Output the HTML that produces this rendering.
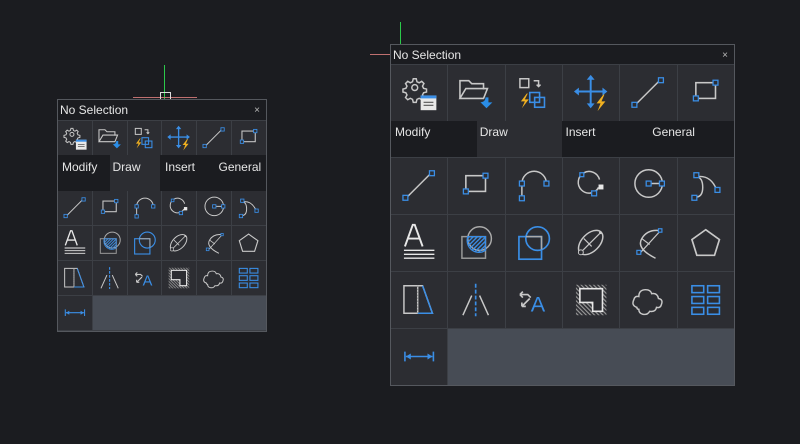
<!DOCTYPE html>
<html><head><meta charset="utf-8"><style>
html,body{margin:0;padding:0;background:#1b1c20;width:800px;height:444px;overflow:hidden;font-family:"Liberation Sans",sans-serif;}
.p{position:absolute;background:#3c3f45;border:1px solid #55585e;box-sizing:border-box;}
.t{background:#1b1c20;color:#e6e6e6;position:relative;}
.t .x{position:absolute;right:6px;top:0;color:#bbb;font-size:10px;}
.g{display:grid;grid-template-columns:repeat(6,1fr);gap:1px;margin-top:1px;}
.c{background:#2c2d32;display:flex;align-items:center;justify-content:center;overflow:hidden;}
.c svg{width:100%;height:100%;}
.sm .c svg{width:112%;height:112%;flex:none;}
.e{background:#474c55;}
.tabs{display:flex;background:#1b1c20;}
.tabs div{flex:1;color:#e6e6e6;box-sizing:border-box;}
.tabs .on{background:#2c2d32;}
.ln{position:absolute;}
</style></head><body>
<svg width="0" height="0" style="position:absolute">
<defs>
<symbol id="gear" viewBox="0 0 57 57"><g stroke="#c8c8c8" stroke-width="2" fill="none" transform="translate(24 23) scale(0.75) translate(-24 -23)"><path d="M22 11h4l1 4 3 1.5 3.5-2 3 3-2 3.5 1.5 3 4 1v4l-4 1-1.5 3 2 3.5-3 3-3.5-2-3 1.5-1 4h-4l-1-4-3-1.5-3.5 2-3-3 2-3.5-1.5-3-4-1v-4l4-1 1.5-3-2-3.5 3-3 3.5 2 3-1.5z"/><circle cx="24" cy="23" r="4"/></g><rect x="30" y="31" width="16" height="15" fill="#e8e8e8"/><rect x="30" y="31" width="16" height="3" fill="#3a8ee6"/><path d="M33 38h10M33 41h10" stroke="#555" stroke-width="1.2"/></symbol>
<symbol id="folder" viewBox="0 0 57 57"><path d="M12 34V16h9l3 3h12v6M12 34l6-10h22l-4 10z" stroke="#c8c8c8" stroke-width="1.6" fill="none"/><path d="M32 38q6 0 6-5h3v5h4l-6 6-6-6h4" fill="#2a8de6"/></symbol>
<symbol id="swap" viewBox="0 0 57 57"><rect x="14" y="14" width="9" height="9" stroke="#c8c8c8" stroke-width="1.5" fill="none"/><path d="M28 16h5v6M31 20l2 2 2-2" stroke="#c8c8c8" stroke-width="1.5" fill="none"/><path d="M21 29l-6 8h4l-3 7 7-9h-4l3-6z" fill="#f0b020"/><rect x="24" y="28" width="10" height="10" stroke="#3a8ee6" stroke-width="1.6" fill="none"/><rect x="29" y="33" width="10" height="10" stroke="#3a8ee6" stroke-width="1.6" fill="none"/></symbol>
<symbol id="move" viewBox="0 0 57 57"><path d="M28 13v28M14 27h28" stroke="#3a8ee6" stroke-width="2"/><path d="M28 10l-4 5h8zM28 44l-4-5h8zM11 27l5-4v8zM45 27l-5-4v8z" fill="#3a8ee6"/><path d="M41 30l-7 9h4l-3 8 8-10h-4l3-7z" fill="#f0b020"/></symbol>
<symbol id="line" viewBox="0 0 57 57"><path d="M15 41L41 15" stroke="#c8c8c8" stroke-width="1.5"/><rect x="12" y="38" width="5" height="5" fill="#2c2d32" stroke="#3a8ee6" stroke-width="1.3"/><rect x="39" y="13" width="5" height="5" fill="#2c2d32" stroke="#3a8ee6" stroke-width="1.3"/></symbol>
<symbol id="rect" viewBox="0 0 57 57"><rect x="18" y="18" width="20" height="16" stroke="#c8c8c8" stroke-width="1.6" fill="none"/><rect x="15.5" y="31.5" width="5" height="5" fill="#2c2d32" stroke="#3a8ee6" stroke-width="1.3"/><rect x="35.5" y="15.5" width="5" height="5" fill="#2c2d32" stroke="#3a8ee6" stroke-width="1.3"/></symbol>
<symbol id="arc" viewBox="0 0 57 57"><path d="M16 41V26A12.5 12.5 0 0 1 41 26" stroke="#c8c8c8" stroke-width="1.5" fill="none"/><g fill="#2c2d32" stroke="#3a8ee6" stroke-width="1.3"><rect x="13.5" y="23.5" width="5" height="5"/><rect x="13.5" y="38.5" width="5" height="5"/><rect x="38.5" y="23.5" width="5" height="5"/></g></symbol>
<symbol id="c3" viewBox="0 0 57 57"><path d="M36 30A11 11 0 1 1 37 22" stroke="#c8c8c8" stroke-width="1.5" fill="none"/><path d="M36 30a11 11 0 0 1-7 6" stroke="#c8c8c8" stroke-width="1.5" fill="none"/><g fill="#2c2d32" stroke="#3a8ee6" stroke-width="1.3"><rect x="17" y="15" width="4" height="4"/><rect x="29" y="33.5" width="5" height="5"/></g><rect x="36" y="27" width="5" height="5" fill="#e8e8e8"/></symbol>
<symbol id="cc" viewBox="0 0 57 57"><circle cx="29" cy="26" r="14" stroke="#c8c8c8" stroke-width="1.5" fill="none"/><path d="M29 26h13" stroke="#c8c8c8" stroke-width="1.5"/><g fill="#2c2d32" stroke="#3a8ee6" stroke-width="1.3"><rect x="26.5" y="23.5" width="5" height="5"/><rect x="40" y="23.5" width="5" height="5"/></g></symbol>
<symbol id="spl" viewBox="0 0 57 57"><path d="M17 40q8 0 8-10t-6-11q14-2 20 13" stroke="#c8c8c8" stroke-width="1.5" fill="none"/><g fill="#2c2d32" stroke="#3a8ee6" stroke-width="1.3"><rect x="14" y="38" width="5" height="5"/><rect x="16" y="15" width="5" height="5"/><rect x="37.5" y="30" width="5" height="5"/></g></symbol>
<symbol id="txt" viewBox="0 0 57 57"><path d="M14 32L22 10h2l8 22M17 24h12" stroke="#e8e8e8" stroke-width="2" fill="none"/><path d="M13 36h31M13 40h31M13 44h31" stroke="#e8e8e8" stroke-width="1.4"/></symbol>
<symbol id="hat" viewBox="0 0 57 57"><defs><pattern id="hp" width="3" height="3" patternUnits="userSpaceOnUse" patternTransform="rotate(45)"><rect width="1.4" height="3" fill="#3a8ee6"/></pattern></defs><rect x="14" y="22" width="24" height="22" stroke="#999" stroke-width="1.5" fill="none"/><circle cx="32" cy="24" r="12" stroke="#aaa" stroke-width="1.5" fill="none"/><path d="M20 22h18v14a12 12 0 0 1-18-14z" fill="url(#hp)" stroke="#3a8ee6" stroke-width="1.2"/></symbol>
<symbol id="reg" viewBox="0 0 57 57"><rect x="13" y="22" width="23" height="23" stroke="#3a8ee6" stroke-width="1.7" fill="none"/><circle cx="32" cy="24" r="12" stroke="#3a8ee6" stroke-width="1.7" fill="none"/><path d="M20 22h16v13" stroke="#aaa" stroke-width="1.5" fill="none"/></symbol>
<symbol id="ell" viewBox="0 0 57 57"><ellipse cx="28" cy="28" rx="15" ry="9" transform="rotate(-45 28 28)" stroke="#c8c8c8" stroke-width="1.5" fill="none"/><path d="M19 37L37 19M21 24l8 8" stroke="#c8c8c8" stroke-width="1.2"/><circle cx="18" cy="38" r="2.5" fill="#2c2d32" stroke="#c8c8c8"/><circle cx="38" cy="18" r="1.5" fill="#ccc"/></symbol>
<symbol id="ela" viewBox="0 0 57 57"><path d="M41 16Q28 14 22 24T36 44" stroke="#c8c8c8" stroke-width="1.5" fill="none"/><path d="M20 39L41 16M22 24l8 6" stroke="#c8c8c8" stroke-width="1.2"/><g fill="#2c2d32" stroke="#3a8ee6" stroke-width="1.2"><rect x="17" y="36" width="4" height="4"/><rect x="39" y="14" width="3.5" height="3.5"/></g></symbol>
<symbol id="pent" viewBox="0 0 57 57"><path d="M28 15L42 25 37 41H19L14 25z" stroke="#c8c8c8" stroke-width="1.7" fill="none"/></symbol>
<symbol id="trap" viewBox="0 0 57 57"><path d="M13 14h14v28H13zM27 14h5l10 28H27" stroke="#c8c8c8" stroke-width="1.5" fill="none"/><path d="M32 14l10 28H27" stroke="#3a8ee6" stroke-width="1.5" fill="none"/><path d="M27 14v28" stroke="#888" stroke-dasharray="1.5 1.5"/></symbol>
<symbol id="xl" viewBox="0 0 57 57"><path d="M28 12v33" stroke="#3a8ee6" stroke-width="1.7" stroke-dasharray="4 2"/><path d="M24 24L15 44M32 24l9 20" stroke="#c8c8c8" stroke-width="1.5"/></symbol>
<symbol id="ta" viewBox="0 0 57 57"><path d="M14 23h8l3 3M14 23l3-3M14 23l3 3M16 35l8-8M16 35h4M16 35v-4" stroke="#c8c8c8" stroke-width="1.7" fill="none"/><text x="25" y="40" font-family="Liberation Sans" font-size="22" fill="#3a8ee6">A</text></symbol>
<symbol id="hb" viewBox="0 0 57 57"><defs><pattern id="hp2" width="3" height="3" patternUnits="userSpaceOnUse" patternTransform="rotate(-45)"><rect width="1.2" height="3" fill="#999"/></pattern></defs><rect x="13" y="13" width="31" height="31" fill="url(#hp2)"/><path d="M17 17h23v23H30V31h-13z" fill="#2c2d32" stroke="#e8e8e8" stroke-width="1.6"/></symbol>
<symbol id="cl" viewBox="0 0 57 57"><path d="M17 36q-6-2-3-8 1-4 5-3 0-7 7-7 5 0 6 4 6-1 7 5 5 1 3 6-1 4-5 3-1 5-7 4-2 4-7 3-4-1-4-5-2 0-2-2z" stroke="#c8c8c8" stroke-width="1.5" fill="none"/></symbol>
<symbol id="tbl" viewBox="0 0 57 57"><g stroke="#3a8ee6" stroke-width="1.6" fill="none"><rect x="14" y="14" width="12" height="7"/><rect x="30" y="14" width="12" height="7"/><rect x="14" y="25" width="12" height="7"/><rect x="30" y="25" width="12" height="7"/><rect x="14" y="36" width="12" height="7"/><rect x="30" y="36" width="12" height="7"/></g></symbol>
<symbol id="dim" viewBox="0 0 57 57"><path d="M14 23v10M43 23v10M15 28h27" stroke="#3a8ee6" stroke-width="1.6"/><path d="M15 28l5-3v6zM42 28l-5-3v6z" fill="#3a8ee6"/></symbol>
</defs></svg>

<div class="ln" style="left:164px;top:65px;width:1px;height:34px;background:#2bc94a"></div>
<div class="ln" style="left:133px;top:97px;width:64px;height:1px;background:#c07070"></div>
<div class="ln" style="left:160px;top:92px;width:9px;height:9px;border:1px solid #ddd"></div>
<div class="ln" style="left:400px;top:22px;width:1px;height:23px;background:#2bc94a"></div>
<div class="ln" style="left:370px;top:54px;width:21px;height:1px;background:#c07070"></div>

<div class="p sm" style="left:57px;top:99px;width:210px;height:233px;">
 <div class="t" style="height:20px;font-size:12px;line-height:21px;padding-left:2px;">No Selection<span class="x">×</span></div>
 <div class="g" style="grid-template-rows:34px;">
  <div class="c"><svg><use href="#gear"/></svg></div><div class="c"><svg><use href="#folder"/></svg></div><div class="c"><svg><use href="#swap"/></svg></div><div class="c"><svg><use href="#move"/></svg></div><div class="c"><svg><use href="#line"/></svg></div><div class="c"><svg><use href="#rect"/></svg></div>
 </div>
 <div class="tabs" style="height:36px;font-size:12px;line-height:24px;">
  <div style="padding-left:4px">Modify</div><div class="on" style="padding-left:3px">Draw</div><div style="padding-left:5px">Insert</div><div style="padding-left:6px">General</div>
 </div>
 <div class="g" style="grid-template-rows:repeat(4,34px);margin-top:0">
  <div class="c"><svg><use href="#line"/></svg></div><div class="c"><svg><use href="#rect"/></svg></div><div class="c"><svg><use href="#arc"/></svg></div><div class="c"><svg><use href="#c3"/></svg></div><div class="c"><svg><use href="#cc"/></svg></div><div class="c"><svg><use href="#spl"/></svg></div>
  <div class="c"><svg><use href="#txt"/></svg></div><div class="c"><svg><use href="#hat"/></svg></div><div class="c"><svg><use href="#reg"/></svg></div><div class="c"><svg><use href="#ell"/></svg></div><div class="c"><svg><use href="#ela"/></svg></div><div class="c"><svg><use href="#pent"/></svg></div>
  <div class="c"><svg><use href="#trap"/></svg></div><div class="c"><svg><use href="#xl"/></svg></div><div class="c"><svg><use href="#ta"/></svg></div><div class="c"><svg><use href="#hb"/></svg></div><div class="c"><svg><use href="#cl"/></svg></div><div class="c"><svg><use href="#tbl"/></svg></div>
  <div class="c"><svg><use href="#dim"/></svg></div><div class="e" style="grid-column:2/7"></div>
 </div>
</div>

<div class="p" style="left:390px;top:44px;width:345px;height:342px;">
 <div class="t" style="height:19px;font-size:12px;line-height:21px;padding-left:2px;">No Selection<span class="x">×</span></div>
 <div class="g" style="grid-template-rows:56px;">
  <div class="c"><svg><use href="#gear"/></svg></div><div class="c"><svg><use href="#folder"/></svg></div><div class="c"><svg><use href="#swap"/></svg></div><div class="c"><svg><use href="#move"/></svg></div><div class="c"><svg><use href="#line"/></svg></div><div class="c"><svg><use href="#rect"/></svg></div>
 </div>
 <div class="tabs" style="height:36px;font-size:12px;line-height:22px;">
  <div style="padding-left:4px">Modify</div><div class="on" style="padding-left:3px">Draw</div><div style="padding-left:4px">Insert</div><div style="padding-left:5px">General</div>
 </div>
 <div class="g" style="grid-template-rows:repeat(4,56px);margin-top:1px">
  <div class="c"><svg><use href="#line"/></svg></div><div class="c"><svg><use href="#rect"/></svg></div><div class="c"><svg><use href="#arc"/></svg></div><div class="c"><svg><use href="#c3"/></svg></div><div class="c"><svg><use href="#cc"/></svg></div><div class="c"><svg><use href="#spl"/></svg></div>
  <div class="c"><svg><use href="#txt"/></svg></div><div class="c"><svg><use href="#hat"/></svg></div><div class="c"><svg><use href="#reg"/></svg></div><div class="c"><svg><use href="#ell"/></svg></div><div class="c"><svg><use href="#ela"/></svg></div><div class="c"><svg><use href="#pent"/></svg></div>
  <div class="c"><svg><use href="#trap"/></svg></div><div class="c"><svg><use href="#xl"/></svg></div><div class="c"><svg><use href="#ta"/></svg></div><div class="c"><svg><use href="#hb"/></svg></div><div class="c"><svg><use href="#cl"/></svg></div><div class="c"><svg><use href="#tbl"/></svg></div>
  <div class="c"><svg><use href="#dim"/></svg></div><div class="e" style="grid-column:2/7"></div>
 </div>
</div>
</body></html>
